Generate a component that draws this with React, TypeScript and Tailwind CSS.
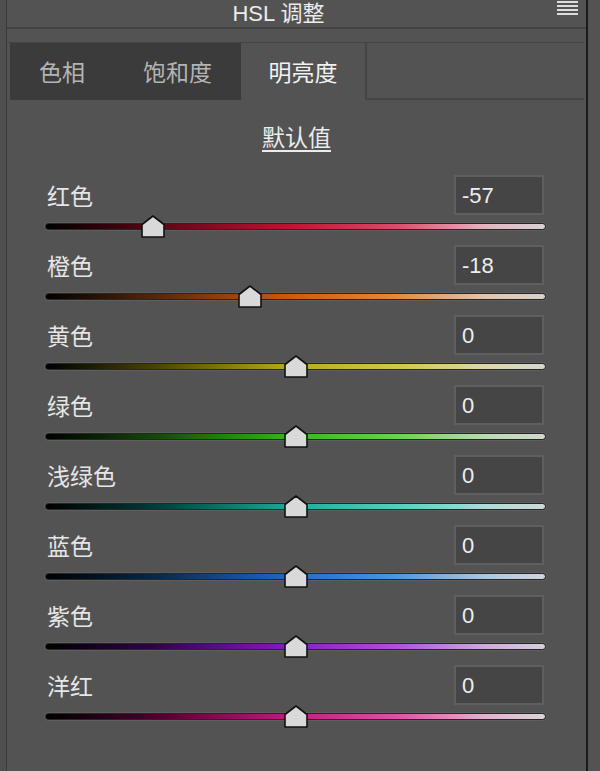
import type { CSSProperties } from "react";

type Channel = { label: string; value: number; gradient: string };

const CHANNELS: Channel[] = [
  { label: "红色", value: -57, gradient: "linear-gradient(90deg,#000 0%,#5a0614 22%,#c01030 48%,#dc4a68 70%,#e4b4c0 88%,#d6d2d4 100%)" },
  { label: "橙色", value: -18, gradient: "linear-gradient(90deg,#000 0%,#5a2604 22%,#c85a10 48%,#e08a40 70%,#e6c4a8 88%,#d6d2cf 100%)" },
  { label: "黄色", value: 0, gradient: "linear-gradient(90deg,#000 0%,#4a4400 22%,#b4a818 48%,#d0c848 70%,#dcd8a8 88%,#d6d6d0 100%)" },
  { label: "绿色", value: 0, gradient: "linear-gradient(90deg,#000 0%,#124a08 22%,#38b01c 48%,#6cd050 70%,#b8dcae 88%,#d2d8d0 100%)" },
  { label: "浅绿色", value: 0, gradient: "linear-gradient(90deg,#000 0%,#003c38 22%,#18a898 48%,#50d0c0 70%,#acdcd6 88%,#d0d8d8 100%)" },
  { label: "蓝色", value: 0, gradient: "linear-gradient(90deg,#000 0%,#022a50 22%,#1c68c0 48%,#4c98dc 70%,#a8c8e4 88%,#d0d4da 100%)" },
  { label: "紫色", value: 0, gradient: "linear-gradient(90deg,#000 0%,#34004c 22%,#8818c0 48%,#b050d8 70%,#d0a8e0 88%,#d6d0da 100%)" },
  { label: "洋红", value: 0, gradient: "linear-gradient(90deg,#000 0%,#4c0030 22%,#c01880 48%,#dc50a8 70%,#e4b0d0 88%,#dcd4d8 100%)" },
];

const FONT = { fontFamily: '"Noto Sans CJK SC", "Noto Sans", sans-serif' };
const LATIN = { fontFamily: '"Liberation Sans", "Noto Sans CJK SC", sans-serif' };

function Thumb({ value }: { value: number }) {
  // track is 501px wide; thumb is centred on the value
  const left = ((value + 100) / 200) * 501 - 12;
  const style: CSSProperties = { left };
  return (
    <svg className="absolute top-0" style={style} width="24" height="23" viewBox="0 0 24 23">
      <polygon points="12,1 23,9.5 23,22 1,22 1,9.5" fill="#d9d9d9" stroke="#111" strokeWidth="1.6" strokeLinejoin="round" />
    </svg>
  );
}

function Row({ ch }: { ch: Channel }) {
  return (
    <div className="h-[70px]">
      <div className="flex h-[40px] items-center justify-between pl-[2px] pr-[2px]">
        <span className="text-[23px] text-[#e6e6e6]">{ch.label}</span>
        <div
          className="flex h-[40px] w-[90px] items-center border-2 border-[#5f5f5f] bg-[#454545] pl-[6px] text-[22px] text-[#eeeeee]"
          style={LATIN}
        >
          {ch.value}
        </div>
      </div>
      <div className="relative h-[30px]">
        <div
          className="absolute top-[8px] h-[7px] w-[501px] rounded-full border border-[#262626] shadow-[0_0_0_1px_#5e5e5e]"
          style={{ background: ch.gradient }}
        />
        <Thumb value={ch.value} />
      </div>
    </div>
  );
}

export default function App() {
  return (
    <div className="flex h-[771px] w-[600px] overflow-hidden bg-[#4f4f4f]" style={FONT}>
      <div className="w-[7px] shrink-0 border-r border-[#3a3a3a]" />
      <div className="flex w-[579px] shrink-0 flex-col bg-[#535353]">
        <div className="relative flex h-[29px] items-center justify-center border-b-2 border-[#424242] pr-[36px]">
          <span className="text-[22px] leading-none text-[#ececec]" style={LATIN}>
            HSL 调整
          </span>
          <div className="absolute right-[8px] top-[1px] flex w-[21px] flex-col gap-[2px]">
            <div className="h-[2px] bg-[#dcdcdc]" />
            <div className="h-[2px] bg-[#dcdcdc]" />
            <div className="h-[2px] bg-[#dcdcdc]" />
            <div className="h-[2px] bg-[#dcdcdc]" />
          </div>
        </div>

        <div className="mt-[13px] mr-[2px] flex h-[58px] border-t border-[#454545]">
          <div className="ml-[3px] flex w-[104px] items-center justify-center bg-[#3b3b3b] text-[23px] text-[#b4b4b4]">色相</div>
          <div className="flex w-[127px] items-center justify-center bg-[#3b3b3b] text-[23px] text-[#b4b4b4]">饱和度</div>
          <div className="flex w-[126px] items-center justify-center border-r-2 border-[#454545] text-[23px] text-[#f2f2f2]">明亮度</div>
          <div className="flex-1 border-b-2 border-[#454545]" />
        </div>

        <div className="flex h-[75px] items-center justify-center pb-[3px]">
          <span className="text-[23px] text-[#ececec] underline underline-offset-[4px] decoration-[1.5px]">默认值</span>
        </div>

        <div className="flex flex-col pl-[38px]">
          {CHANNELS.map((ch) => (
            <div key={ch.label} className="w-[501px]">
              <Row ch={ch} />
            </div>
          ))}
        </div>
      </div>
      <div className="w-[2px] shrink-0 bg-[#1a1a1a]" />
      <div className="flex-1 bg-[#535353]" />
    </div>
  );
}
